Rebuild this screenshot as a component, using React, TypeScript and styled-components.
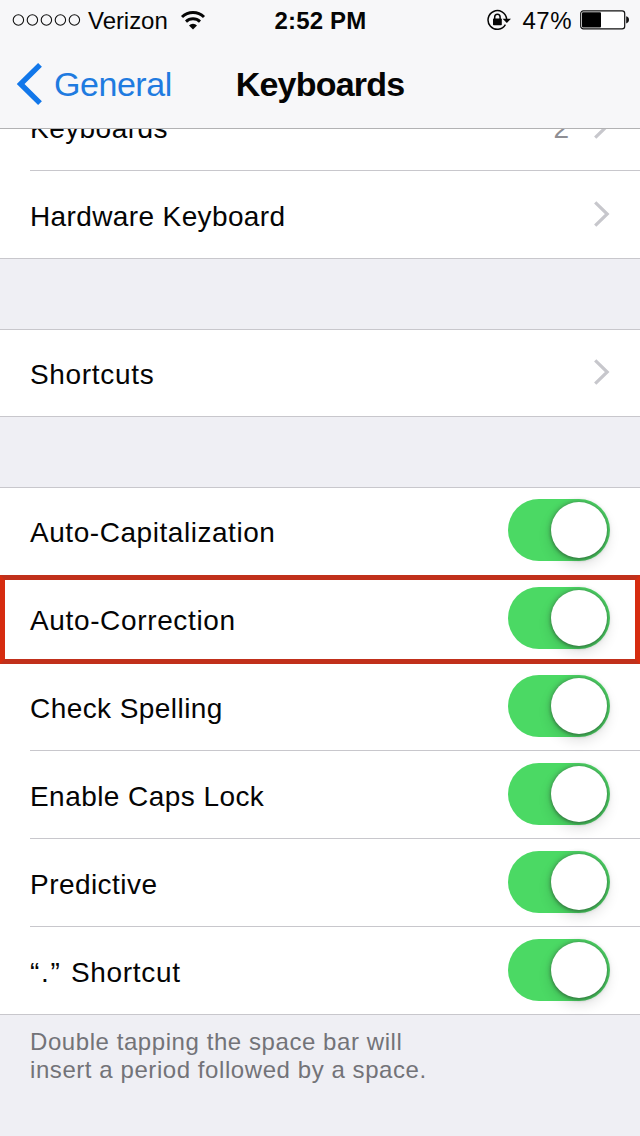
import React from "react";
import styled, { createGlobalStyle } from "styled-components";

const Global = createGlobalStyle`
  * { box-sizing: border-box; }
  body { margin: 0; background: #efeff4; }
`;

const Screen = styled.div`
  width: 640px;
  height: 1136px;
  display: flex;
  flex-direction: column;
  overflow: hidden;
  background: #efeff4;
  color: #050505;
  font-family: "Liberation Sans", Arial, sans-serif;
`;

const Header = styled.header`
  position: relative;
  z-index: 2;
  flex: none;
  height: 129px;
  background: #f7f7f9;
  border-bottom: 1px solid #b2b2b4;
`;

const StatusBar = styled.div`
  display: grid;
  grid-template-columns: 1fr auto 1fr;
  align-items: center;
  height: 40px;
  padding: 0 11px 0 12px;
`;

const StatusSide = styled.div<{ $end?: boolean }>`
  display: flex;
  align-items: center;
  justify-content: ${(p) => (p.$end ? "flex-end" : "flex-start")};
`;

const StatusText = styled.span<{ $bold?: boolean; $track?: number }>`
  font-size: 24px;
  line-height: 28px;
  padding-top: 1px;
  white-space: nowrap;
  font-weight: ${(p) => (p.$bold ? 700 : 400)};
  letter-spacing: ${(p) => p.$track ?? 0}px;
`;

const Carrier = styled(StatusText)`
  margin: 0 12px 0 7px;
`;

const Percent = styled(StatusText)`
  margin: 0 8px 0 11px;
`;

const NavBar = styled.nav`
  display: grid;
  grid-template-columns: 1fr auto 1fr;
  align-items: center;
  height: 88px;
  padding: 0 16px;
`;

const BackButton = styled.a`
  display: flex;
  align-items: center;
  gap: 11px;
  color: #1f7be0;
  font-size: 34px;
  line-height: 40px;
  letter-spacing: -0.45px;
`;

const Title = styled.h1`
  margin: 0;
  font-size: 34px;
  line-height: 40px;
  font-weight: 700;
  letter-spacing: -0.8px;
`;

const Content = styled.main`
  margin-top: -46px;
`;

const Group = styled.section<{ $first?: boolean }>`
  margin-top: ${(p) => (p.$first ? 0 : 70)}px;
  background: #fff;
  box-shadow: inset 0 1px #c8c7cc, inset 0 -1px #c8c7cc;
`;

const Row = styled.div<{ $line?: boolean }>`
  position: relative;
  display: flex;
  align-items: center;
  height: 88px;
  padding: 0 30px 2px;
  background: linear-gradient(#c8c7cc, #c8c7cc) 30px 100% / ${(p) => (p.$line ? "610px 1px" : "0 0")} no-repeat;
`;

const Label = styled.span<{ $track: number }>`
  flex: 1;
  padding-top: 5px;
  font-size: 28px;
  line-height: 32px;
  letter-spacing: ${(p) => p.$track}px;
`;

const Quoted = styled.span`
  letter-spacing: 1.7px;
`;

const Value = styled.span`
  padding: 5px 25px 0 0;
  font-size: 28px;
  line-height: 32px;
  color: #8e8e93;
`;

const Track = styled.span`
  display: flex;
  justify-content: flex-end;
  width: 102px;
  height: 62px;
  padding: 3px;
  border-radius: 31px;
  background: #4bd964;
`;

const Knob = styled.span`
  width: 56px;
  height: 56px;
  border-radius: 50%;
  background: #fff;
  box-shadow: 0 0 4px 1px rgba(60, 80, 65, 0.42), 0 2px 3px rgba(0, 0, 0, 0.22), 0 6px 14px rgba(0, 0, 0, 0.14);
`;

const Highlight = styled.div`
  position: absolute;
  z-index: 1;
  top: 0;
  left: 0;
  right: 0;
  height: 89px;
  border: 5px solid;
  border-color: #c1301b #d62c10;
`;

const Note = styled.p`
  margin: 0;
  padding: 13px 30px 0;
  color: #737378;
  font-size: 24px;
  line-height: 28px;
`;

const NoteLine = styled.span<{ $track: number }>`
  display: block;
  letter-spacing: ${(p) => p.$track}px;
`;

const Signal = () => (
  <svg width="69" height="14" viewBox="0 0 69 14" fill="none" stroke="#111" strokeWidth="1.1">
    {[6.4, 20.4, 34.4, 48.4, 62.4].map((x) => (
      <circle key={x} cx={x} cy="7" r="5.2" />
    ))}
  </svg>
);

const Wifi = () => (
  <svg width="26" height="20" viewBox="0 0 26 20" fill="none" stroke="#050505">
    <path d="M2 7 A16 16 0 0 1 24 7" strokeWidth="3" />
    <path d="M6 11.6 A10.2 10.2 0 0 1 20 11.6" strokeWidth="2.9" />
    <path d="M13 19.6 L9 15.4 A5.8 5.8 0 0 1 17 15.4 Z" fill="#050505" stroke="none" />
  </svg>
);

const RotationLock = () => (
  <svg width="24" height="22" viewBox="0 0 24 22" fill="none" stroke="#050505">
    <path d="M18.4 15.6 A9.3 9.3 0 1 1 19.6 10" strokeWidth="1.5" />
    <path d="M15.6 9.8 H24 L19.8 14 Z" fill="#050505" stroke="none" />
    <path d="M7.7 10.5 V8 A2.7 2.8 0 0 1 13.1 8 V10.5" strokeWidth="1.5" />
    <rect x="6" y="9.6" width="8.8" height="6.6" rx="0.7" fill="#050505" stroke="none" />
  </svg>
);

const Battery = () => (
  <svg width="49" height="20" viewBox="0 0 49 20">
    <rect x="0.7" y="0.8" width="44" height="18" rx="2.6" fill="#fff" stroke="#111" strokeWidth="1.2" />
    <rect x="2" y="2.2" width="19" height="15.2" rx="1" fill="#000" />
    <path d="M46.2 6.2 Q49 7 49 9.8 T46.2 13.4 Z" fill="#111" />
  </svg>
);

const BackChevron = () => (
  <svg width="27" height="44" viewBox="0 0 27 44" fill="none">
    <path d="M24 2.8 L4.6 22 L24 41.2" stroke="#1277ea" strokeWidth="5.4" />
  </svg>
);

const Disclosure = () => (
  <svg width="16" height="26" viewBox="0 0 16 26" fill="none">
    <path d="M1.2 1.4 L13.2 13 L1.2 24.6" stroke="#c7c7cc" strokeWidth="3.2" />
  </svg>
);

const Switch = () => (
  <Track role="switch" aria-checked="true">
    <Knob />
  </Track>
);

type Toggle = { id: string; label: React.ReactNode; track: number; line?: boolean; marked?: boolean };

const toggles: Toggle[] = [
  { id: "capitalization", label: "Auto-Capitalization", track: 0.55 },
  { id: "correction", label: "Auto-Correction", track: 0.64, marked: true },
  { id: "spelling", label: "Check Spelling", track: 0.43, line: true },
  { id: "caps", label: "Enable Caps Lock", track: 0.44, line: true },
  { id: "predictive", label: "Predictive", track: 0.45, line: true },
  { id: "period", label: <><Quoted>“.” </Quoted>Shortcut</>, track: 0.66 },
];

export default function App() {
  return (
    <Screen>
      <Global />
      <Header>
        <StatusBar>
          <StatusSide>
            <Signal />
            <Carrier $track={-0.05}>Verizon</Carrier>
            <Wifi />
          </StatusSide>
          <StatusText $bold $track={0.15}>2:52 PM</StatusText>
          <StatusSide $end>
            <RotationLock />
            <Percent $track={0.5}>47%</Percent>
            <Battery />
          </StatusSide>
        </StatusBar>
        <NavBar>
          <BackButton>
            <BackChevron />
            General
          </BackButton>
          <Title>Keyboards</Title>
        </NavBar>
      </Header>
      <Content>
        <Group $first>
          <Row $line>
            <Label $track={0.45}>Keyboards</Label>
            <Value>2</Value>
            <Disclosure />
          </Row>
          <Row>
            <Label $track={0.38}>Hardware Keyboard</Label>
            <Disclosure />
          </Row>
        </Group>
        <Group>
          <Row>
            <Label $track={0.67}>Shortcuts</Label>
            <Disclosure />
          </Row>
        </Group>
        <Group>
          {toggles.map((t) => (
            <Row key={t.id} $line={t.line}>
              <Label $track={t.track}>{t.label}</Label>
              <Switch />
              {t.marked && <Highlight />}
            </Row>
          ))}
        </Group>
        <Note>
          <NoteLine $track={0.57}>Double tapping the space bar will</NoteLine>
          <NoteLine $track={0.57}>insert a period followed by a space.</NoteLine>
        </Note>
      </Content>
    </Screen>
  );
}
